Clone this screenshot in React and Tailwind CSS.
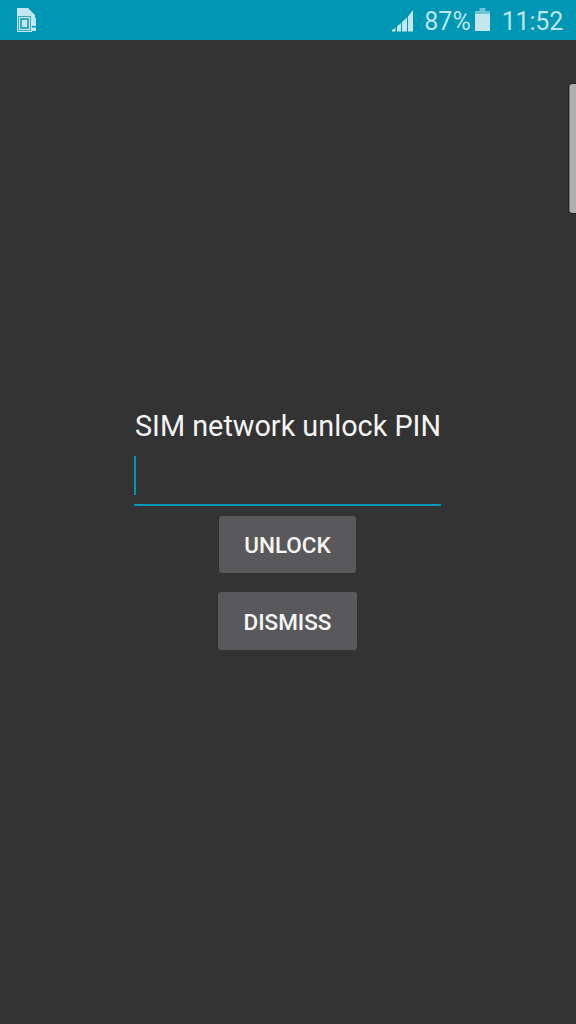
const StatusBar = () => {
  return (
    <div className="flex items-center h-10 bg-[#0097b4] pl-4 pr-[13px] text-[#bfe5ed]">
      <svg width="21" height="24" viewBox="0 0 21 24">
        <path d="M1 0h11l7 7v9h-3v8H1z" fill="#c4e7ef" />
        <rect x="2.500" y="8.500" width="12" height="14" fill="none" stroke="#3aa9c2" strokeWidth="1" />
        <rect x="5" y="11" width="7" height="9" fill="none" stroke="#0097b4" strokeWidth="1.500" />
        <rect x="16" y="10" width="4" height="8" fill="#c4e7ef" />
        <rect x="16" y="19.500" width="4" height="3.500" fill="#c4e7ef" />
      </svg>

      <div className="flex items-center ml-auto">
        <svg width="21" height="22" viewBox="0 0 21 22" className="mr-[11px] mt-[1px]">
          <path d="M0 21.500v-1.500l3.500-2v3.500z" fill="#c4e7ef" />
          <path d="M5 21.500v-5l4-3.500v8.500z" fill="#c4e7ef" />
          <path d="M10 21.500v-9.500l5-4.500v14z" fill="#c4e7ef" />
          <path d="M16 21.500v-15l5-6.500v21.500z" fill="#c4e7ef" />
        </svg>

        <span className="text-[25px] leading-none mr-[4px] mt-[2px]">87%</span>

        <svg width="15" height="23" viewBox="0 0 15 23" className="mr-[12px] mb-[1px]">
          <rect x="4.500" y="0" width="6" height="3" fill="#6fc4d6" />
          <rect x="0" y="3" width="15" height="3" fill="#6fc4d6" />
          <rect x="0" y="6" width="15" height="17" fill="#c4e7ef" />
        </svg>

        <span className="text-[25px] leading-none tracking-[-0.2px] mt-[2px]">11:52</span>
      </div>
    </div>
  );
};

export default function App() {
  return (
    <div className="relative w-[576px] h-[1024px] bg-[#333333] overflow-hidden font-['Roboto',sans-serif]">
      <StatusBar />

      <div className="absolute right-0 top-[83px] w-[8px] h-[131px] rounded-l-[4px] bg-[#b0b0b0] border border-r-0 border-[#222222] shadow-[inset_1px_0_0_#777777]" />

      <div className="flex flex-col items-center pt-[367px]">
        <div className="w-[307px] mr-[1px]">
          <div className="text-[28.800px] leading-[38px] text-[#f5f5f5] whitespace-nowrap pl-[1px]">
            SIM network unlock PIN
          </div>

          <div className="h-[50px] mt-[11px] border-b-2 border-[#0097b4]">
            <div className="w-[2px] h-[39px] bg-[#0097b4]" />
          </div>
        </div>

        <button className="w-[137px] h-[57px] pt-[2px] mt-[10px] mr-[1px] rounded-[3px] bg-[#59595b] text-[22.500px] font-medium text-[#f5f5f5]">
          UNLOCK
        </button>

        <button className="w-[139px] h-[58px] pt-[3px] mt-[19px] mr-[1px] rounded-[3px] bg-[#59595b] text-[22.500px] font-medium text-[#f5f5f5]">
          DISMISS
        </button>
      </div>
    </div>
  );
}
